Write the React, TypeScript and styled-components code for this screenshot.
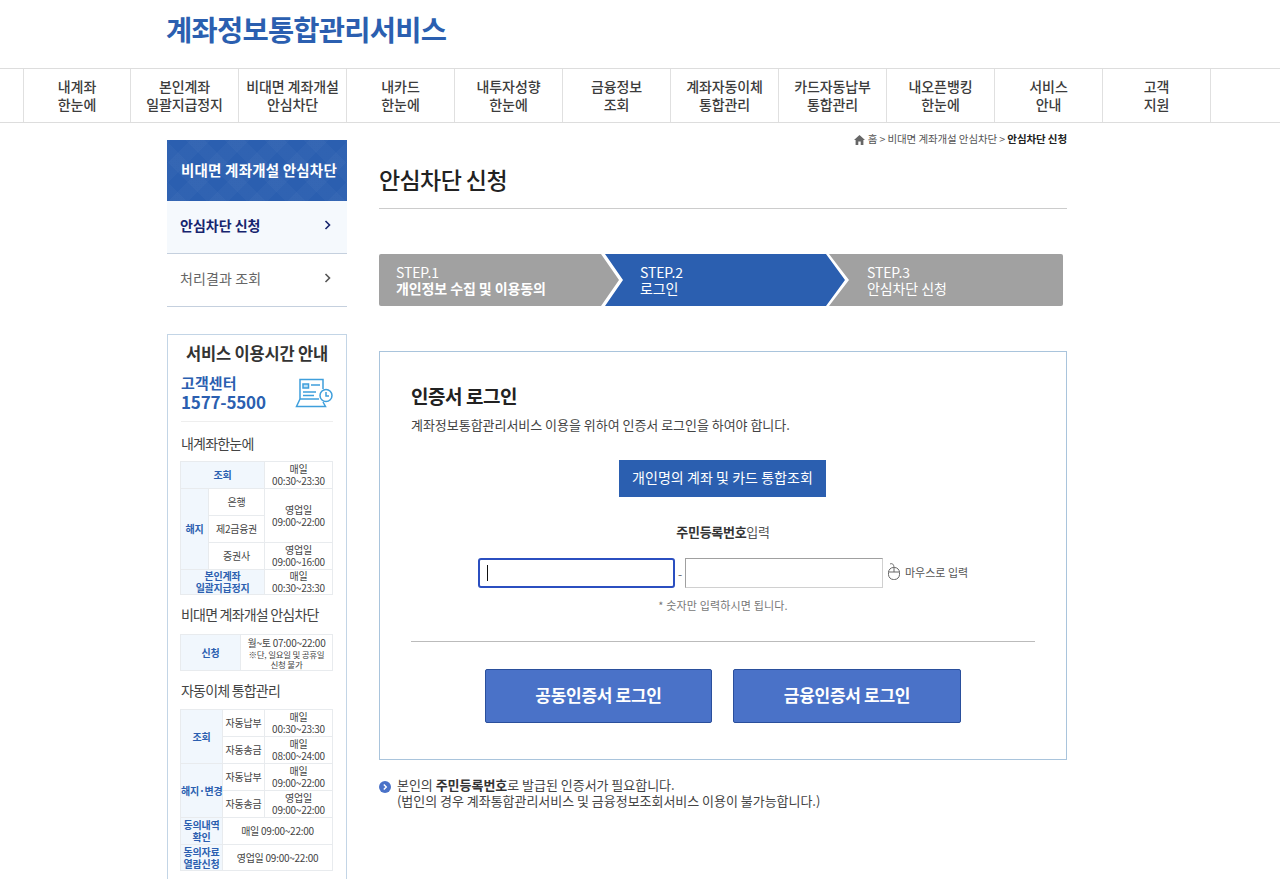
import React from 'react'
import styled, { createGlobalStyle } from 'styled-components'

const FONT = `"Noto Sans CJK KR", "Noto Sans", sans-serif`
const BLUE = '#2b5fb0'

const GlobalStyle = createGlobalStyle`
  html, body {
    margin: 0;
    padding: 0;
    background: #fff;
    font-family: ${FONT};
    color: #444;
    overflow: hidden;
  }
  * {
    box-sizing: border-box;
  }
`

const Page = styled.div`
  width: 1280px;
  height: 879px;
  overflow: hidden;
`

const Header = styled.header`
  height: 68px;
  padding: 9px 0 0 166px;
`

const Logo = styled.h1`
  margin: 0;
  font-size: 28.5px;
  line-height: 40px;
  font-weight: 700;
  letter-spacing: -0.75px;
  color: ${BLUE};
`

const Nav = styled.nav`
  height: 55px;
  display: flex;
  padding-left: 23px;
  border-top: 1px solid #ddd;
  border-bottom: 1px solid #ddd;
`

const NavItem = styled.a`
  width: 108px;
  padding-top: 8px;
  border-left: 1px solid #e0e0e0;
  font-size: 14px;
  line-height: 18px;
  font-weight: 500;
  letter-spacing: -0.1px;
  color: #3c3c3c;
  text-align: center;
  white-space: pre-line;
  &:first-child {
    width: 107px;
  }
  &:last-child {
    width: 109px;
    border-right: 1px solid #e0e0e0;
  }
`

const Body = styled.div`
  display: flex;
  padding-left: 167px;
`

const Sidebar = styled.aside`
  width: 180px;
  padding-top: 17px;
`

const SideTitle = styled.div`
  height: 61px;
  display: flex;
  align-items: center;
  padding: 0 0 3px 14px;
  background-color: ${BLUE};
  background-image: repeating-linear-gradient(45deg, rgba(255, 255, 255, 0.025) 0 14px, transparent 14px 28px),
    repeating-linear-gradient(-45deg, rgba(255, 255, 255, 0.025) 0 14px, transparent 14px 28px);
  color: #fff;
  font-size: 14.5px;
  font-weight: 700;
  letter-spacing: 0.2px;
  white-space: nowrap;
`

const SideItem = styled.a<{ $active?: boolean }>`
  height: 53px;
  display: flex;
  align-items: center;
  justify-content: space-between;
  padding: 0 16px 4px 13px;
  background: ${({ $active }) => ($active ? '#f5f9fd' : '#fff')};
  border-bottom: 1px solid #c5d0de;
  font-size: 14px;
  font-weight: ${({ $active }) => ($active ? 700 : 400)};
  letter-spacing: ${({ $active }) => ($active ? 0 : 0.1)}px;
  color: ${({ $active }) => ($active ? '#16246e' : '#666')};
`

const Panel = styled.section`
  margin-top: 27px;
  height: 560px;
  padding: 6px 13px 0;
  border: 1px solid #c3d5e6;
`

const PanelTitle = styled.h3`
  margin: 0;
  font-size: 16.5px;
  line-height: 24px;
  font-weight: 700;
  letter-spacing: -0.2px;
  color: #333;
  text-align: center;
  white-space: nowrap;
`

const Center = styled.div`
  display: flex;
  justify-content: space-between;
  align-items: center;
  height: 52px;
  margin-top: 5px;
  padding-bottom: 6px;
  border-bottom: 1px solid #eee;
  color: ${BLUE};
`

const CenterName = styled.div`
  font-size: 15px;
  line-height: 18px;
  font-weight: 700;
  letter-spacing: 0.1px;
`

const CenterTel = styled.div`
  font-size: 17px;
  line-height: 19px;
  font-weight: 700;
  letter-spacing: -0.2px;
`

const GroupTitle = styled.h4<{ $h: number; $top: number }>`
  margin: 0;
  height: ${({ $h }) => $h}px;
  padding-top: ${({ $top }) => $top}px;
  font-size: 14px;
  line-height: 20px;
  font-weight: 400;
  letter-spacing: -0.8px;
  color: #444;
  white-space: nowrap;
`

const Table = styled.table`
  width: 152px;
  margin-left: -1px;
  table-layout: fixed;
  border-collapse: collapse;
`

const Cell = styled.td<{ $h?: number }>`
  height: ${({ $h }) => $h ?? 27}px;
  padding: 0;
  border: 1px solid #e8ebee;
  font-size: 10px;
  line-height: 12px;
  letter-spacing: -0.25px;
  color: #444;
  text-align: center;
  white-space: nowrap;
`

const HeadCell = styled(Cell)`
  background: #f1f7fd;
  color: ${BLUE};
  font-weight: 700;
`

const SmallNote = styled.span`
  display: block;
  font-size: 8.5px;
  line-height: 10px;
`

const Main = styled.main`
  width: 688px;
  margin-left: 32px;
`

const Crumbs = styled.div`
  height: 32px;
  padding-top: 8px;
  display: flex;
  justify-content: flex-end;
  align-items: flex-start;
  gap: 3px;
  font-size: 10.5px;
  line-height: 15px;
  letter-spacing: -0.1px;
  color: #555;
  white-space: pre;
  b {
    color: #222;
  }
  svg {
    margin-top: 4px;
  }
`

const PageTitle = styled.h2`
  margin: 0;
  height: 54px;
  padding-top: 7px;
  border-bottom: 1px solid #ccc;
  font-size: 23px;
  line-height: 34px;
  font-weight: 500;
  letter-spacing: -0.6px;
  color: #222;
`

const Steps = styled.ol`
  display: flex;
  width: 684px;
  height: 52px;
  margin: 45px 0 0;
  padding: 0;
  list-style: none;
  background: #a1a1a1;
  border-radius: 2px;
  color: #fff;
  font-size: 14px;
  line-height: 16px;
  letter-spacing: -0.1px;
  white-space: nowrap;
`

const Step = styled.li<{ $w: number; $pad: number }>`
  width: ${({ $w }) => $w}px;
  padding: 10px 0 0 ${({ $pad }) => $pad}px;
`

const ActiveStep = styled.li`
  width: 248px;
  background: #fff;
  clip-path: polygon(0 0, 228px 0, 100% 50%, 228px 100%, 0 100%, 18px 50%);
`

const ActiveInner = styled.div`
  height: 100%;
  padding: 10px 0 0 39px;
  background: ${BLUE};
  clip-path: polygon(4px 0, 225px 0, 244px 50%, 225px 100%, 4px 100%, 22px 50%);
`

const StepNo = styled.div`
  font-weight: 400;
`

const LoginBox = styled.section`
  height: 409px;
  margin-top: 45px;
  padding: 29px 31px 0;
  border: 1px solid #a9c4dc;
`

const LoginTitle = styled.h3`
  margin: 0;
  font-size: 19px;
  line-height: 30px;
  font-weight: 700;
  letter-spacing: -0.45px;
  color: #222;
`

const LoginDesc = styled.p`
  margin: 4px 0 0;
  font-size: 13px;
  line-height: 20px;
  letter-spacing: -0.03px;
  color: #444;
`

const ScopeButton = styled.button`
  display: block;
  width: 207px;
  height: 37px;
  margin: 25px 0 0 208px;
  padding: 0 0 3px;
  border: 0;
  background: ${BLUE};
  color: #fff;
  font-family: ${FONT};
  font-size: 14px;
  letter-spacing: 0.05px;
  white-space: nowrap;
`

const IdLabel = styled.div`
  margin-top: 25px;
  font-size: 13px;
  line-height: 20px;
  letter-spacing: -0.3px;
  text-align: center;
  color: #555;
  b {
    color: #333;
  }
`

const IdRow = styled.div`
  display: flex;
  align-items: center;
  height: 30px;
  margin: 16px 0 0 67px;
  color: #666;
  font-size: 12px;
`

const FocusField = styled.span`
  position: relative;
  display: flex;
`

const Caret = styled.i`
  position: absolute;
  left: 9px;
  top: 7px;
  width: 1px;
  height: 16px;
  background: #111;
`

const IdInput = styled.input<{ $focus?: boolean }>`
  width: ${({ $focus }) => ($focus ? 197 : 198)}px;
  height: 30px;
  padding: 0 8px;
  background: #fff;
  font-size: 14px;
  border-radius: ${({ $focus }) => ($focus ? 3 : 0)}px;
  border: ${({ $focus }) => ($focus ? '2px solid #2b4fc0' : '1px solid')};
  border-color: ${({ $focus }) => ($focus ? '#2b4fc0' : '#a0a0a0 #d0d0d0 #d0d0d0 #a0a0a0')};
  outline: none;
`

const Dash = styled.span`
  width: 10px;
  text-align: center;
`

const MouseHint = styled.span`
  display: flex;
  align-items: center;
  gap: 4px;
  margin: -3px 0 0 4px;
  font-size: 11px;
  letter-spacing: 0;
  color: #555;
  white-space: nowrap;
  span {
    margin-top: 1px;
  }
`

const IdNote = styled.div`
  margin-top: 9px;
  font-size: 11px;
  line-height: 17px;
  letter-spacing: 0.15px;
  text-align: center;
  color: #777;
`

const Divider = styled.hr`
  height: 1px;
  margin: 27px 0 0;
  border: 0;
  background: #bbb;
`

const ButtonRow = styled.div`
  display: flex;
  gap: 21px;
  margin: 27px 0 0 74px;
`

const LoginButton = styled.button<{ $w: number }>`
  width: ${({ $w }) => $w}px;
  height: 54px;
  padding: 0 0 3px;
  border: 1px solid #2a4f9c;
  border-radius: 2px;
  background: #4a72c8;
  color: #fff;
  font-family: ${FONT};
  font-size: 17px;
  font-weight: 700;
  letter-spacing: -0.3px;
`

const Notice = styled.div`
  display: flex;
  gap: 6px;
  margin-top: 17px;
  font-size: 13px;
  line-height: 16px;
  letter-spacing: -0.03px;
  color: #444;
  b {
    color: #333;
  }
  svg {
    flex: none;
    margin-top: 4px;
  }
`

const Chevron = ({ color }: { color: string }) => (
  <svg width="7" height="10" viewBox="0 0 7 10">
    <path d="M1.5 1l4 4-4 4" fill="none" stroke={color} strokeWidth="1.6" />
  </svg>
)

const HomeIcon = () => (
  <svg width="11" height="10" viewBox="0 0 11 10">
    <path d="M5.5 0L0 5h1.6v5h2.7V6.6h2.4V10h2.7V5H11z" fill="#666" />
  </svg>
)

const DeskIcon = () => (
  <svg width="38" height="30" viewBox="0 0 38 30" fill="none" stroke="#3f9fdc" strokeWidth="1.5">
    <path d="M5 21V1.500h23V11" />
    <path d="M5 21h19" />
    <path d="M5 21L1.500 28.500h29L28 24" />
    <path d="M8 6h5.500v4H8z" fill="#bfe0f5" />
    <path d="M16 7h9M8 14h13M8 17.500h11" />
    <circle cx="31" cy="17.500" r="6" fill="#fff" />
    <path d="M31 14v4h3" />
  </svg>
)

const MouseIcon = () => (
  <svg width="14" height="18" viewBox="0 0 14 18" fill="none" stroke="#666" strokeWidth="1">
    <path d="M3 1c2-1 4 0 4 4" />
    <rect x="1.500" y="4.500" width="11" height="12" rx="5" />
    <path d="M1.500 9h11M7 4.500V9" />
  </svg>
)

const BulletIcon = () => (
  <svg width="12" height="12" viewBox="0 0 12 12">
    <circle cx="6" cy="6" r="6" fill="#4a72c8" />
    <path d="M4.800 3.500L7.300 6l-2.500 2.500" fill="none" stroke="#fff" strokeWidth="1.4" />
  </svg>
)

const Time = ({ a, b }: { a: string; b: string }) => (
  <>
    {a}
    <br />
    {b}
  </>
)

const navItems = [
  '내계좌\n한눈에',
  '본인계좌\n일괄지급정지',
  '비대면 계좌개설\n안심차단',
  '내카드\n한눈에',
  '내투자성향\n한눈에',
  '금융정보\n조회',
  '계좌자동이체\n통합관리',
  '카드자동납부\n통합관리',
  '내오픈뱅킹\n한눈에',
  '서비스\n안내',
  '고객\n지원',
]

export default function App() {
  return (
    <Page>
      <GlobalStyle />
      <Header>
        <Logo>계좌정보통합관리서비스</Logo>
      </Header>
      <Nav>
        {navItems.map((label) => (
          <NavItem key={label}>{label}</NavItem>
        ))}
      </Nav>
      <Body>
        <Sidebar>
          <SideTitle>비대면 계좌개설 안심차단</SideTitle>
          <SideItem $active>
            안심차단 신청
            <Chevron color="#16246e" />
          </SideItem>
          <SideItem>
            처리결과 조회
            <Chevron color="#555" />
          </SideItem>
          <Panel>
            <PanelTitle>서비스 이용시간 안내</PanelTitle>
            <Center>
              <div>
                <CenterName>고객센터</CenterName>
                <CenterTel>1577-5500</CenterTel>
              </div>
              <DeskIcon />
            </Center>
            <GroupTitle $h={39} $top={11}>
              내계좌한눈에
            </GroupTitle>
            <Table>
              <colgroup>
                <col width="28" />
                <col width="56" />
                <col width="68" />
              </colgroup>
              <tbody>
                <tr>
                  <HeadCell colSpan={2}>조회</HeadCell>
                  <Cell>
                    <Time a="매일" b="00:30~23:30" />
                  </Cell>
                </tr>
                <tr>
                  <HeadCell rowSpan={3}>해지</HeadCell>
                  <Cell>은행</Cell>
                  <Cell rowSpan={2}>
                    <Time a="영업일" b="09:00~22:00" />
                  </Cell>
                </tr>
                <tr>
                  <Cell>제2금융권</Cell>
                </tr>
                <tr>
                  <Cell>증권사</Cell>
                  <Cell>
                    <Time a="영업일" b="09:00~16:00" />
                  </Cell>
                </tr>
                <tr>
                  <HeadCell colSpan={2} $h={25}>
                    <Time a="본인계좌" b="일괄지급정지" />
                  </HeadCell>
                  <Cell $h={25}>
                    <Time a="매일" b="00:30~23:30" />
                  </Cell>
                </tr>
              </tbody>
            </Table>
            <GroupTitle $h={39} $top={9}>
              비대면 계좌개설 안심차단
            </GroupTitle>
            <Table>
              <colgroup>
                <col width="60" />
                <col width="92" />
              </colgroup>
              <tbody>
                <tr>
                  <HeadCell $h={36}>신청</HeadCell>
                  <Cell $h={36}>
                    월~토 07:00~22:00
                    <SmallNote>
                      ※단, 일요일 및 공휴일
                      <br />
                      신청 불가
                    </SmallNote>
                  </Cell>
                </tr>
              </tbody>
            </Table>
            <GroupTitle $h={38} $top={9}>
              자동이체 통합관리
            </GroupTitle>
            <Table>
              <colgroup>
                <col width="42" />
                <col width="42" />
                <col width="68" />
              </colgroup>
              <tbody>
                <tr>
                  <HeadCell rowSpan={2}>조회</HeadCell>
                  <Cell>자동납부</Cell>
                  <Cell>
                    <Time a="매일" b="00:30~23:30" />
                  </Cell>
                </tr>
                <tr>
                  <Cell>자동송금</Cell>
                  <Cell>
                    <Time a="매일" b="08:00~24:00" />
                  </Cell>
                </tr>
                <tr>
                  <HeadCell rowSpan={2}>해지·변경</HeadCell>
                  <Cell>자동납부</Cell>
                  <Cell>
                    <Time a="매일" b="09:00~22:00" />
                  </Cell>
                </tr>
                <tr>
                  <Cell>자동송금</Cell>
                  <Cell>
                    <Time a="영업일" b="09:00~22:00" />
                  </Cell>
                </tr>
                <tr>
                  <HeadCell>
                    <Time a="동의내역" b="확인" />
                  </HeadCell>
                  <Cell colSpan={2}>매일 09:00~22:00</Cell>
                </tr>
                <tr>
                  <HeadCell $h={26}>
                    <Time a="동의자료" b="열람신청" />
                  </HeadCell>
                  <Cell colSpan={2} $h={26}>
                    영업일 09:00~22:00
                  </Cell>
                </tr>
              </tbody>
            </Table>
          </Panel>
        </Sidebar>
        <Main>
          <Crumbs>
            <HomeIcon />
            <span>
              홈 &gt; 비대면 계좌개설 안심차단 &gt; <b>안심차단 신청</b>
            </span>
          </Crumbs>
          <PageTitle>안심차단 신청</PageTitle>
          <Steps>
            <Step $w={222} $pad={17}>
              <StepNo>STEP.1</StepNo>
              <b>개인정보 수집 및 이용동의</b>
            </Step>
            <ActiveStep>
              <ActiveInner>
                <StepNo>STEP.2</StepNo>
                로그인
              </ActiveInner>
            </ActiveStep>
            <Step $w={214} $pad={18}>
              <StepNo>STEP.3</StepNo>
              안심차단 신청
            </Step>
          </Steps>
          <LoginBox>
            <LoginTitle>인증서 로그인</LoginTitle>
            <LoginDesc>계좌정보통합관리서비스 이용을 위하여 인증서 로그인을 하여야 합니다.</LoginDesc>
            <ScopeButton>개인명의 계좌 및 카드 통합조회</ScopeButton>
            <IdLabel>
              <b>주민등록번호</b>입력
            </IdLabel>
            <IdRow>
              <FocusField>
                <IdInput $focus aria-label="주민등록번호 앞자리" />
                <Caret />
              </FocusField>
              <Dash>-</Dash>
              <IdInput aria-label="주민등록번호 뒷자리" />
              <MouseHint>
                <MouseIcon />
                <span>마우스로 입력</span>
              </MouseHint>
            </IdRow>
            <IdNote>* 숫자만 입력하시면 됩니다.</IdNote>
            <Divider />
            <ButtonRow>
              <LoginButton $w={227}>공동인증서 로그인</LoginButton>
              <LoginButton $w={228}>금융인증서 로그인</LoginButton>
            </ButtonRow>
          </LoginBox>
          <Notice>
            <BulletIcon />
            <div>
              본인의 <b>주민등록번호</b>로 발급된 인증서가 필요합니다.
              <br />
              (법인의 경우 계좌통합관리서비스 및 금융정보조회서비스 이용이 불가능합니다.)
            </div>
          </Notice>
        </Main>
      </Body>
    </Page>
  )
}
